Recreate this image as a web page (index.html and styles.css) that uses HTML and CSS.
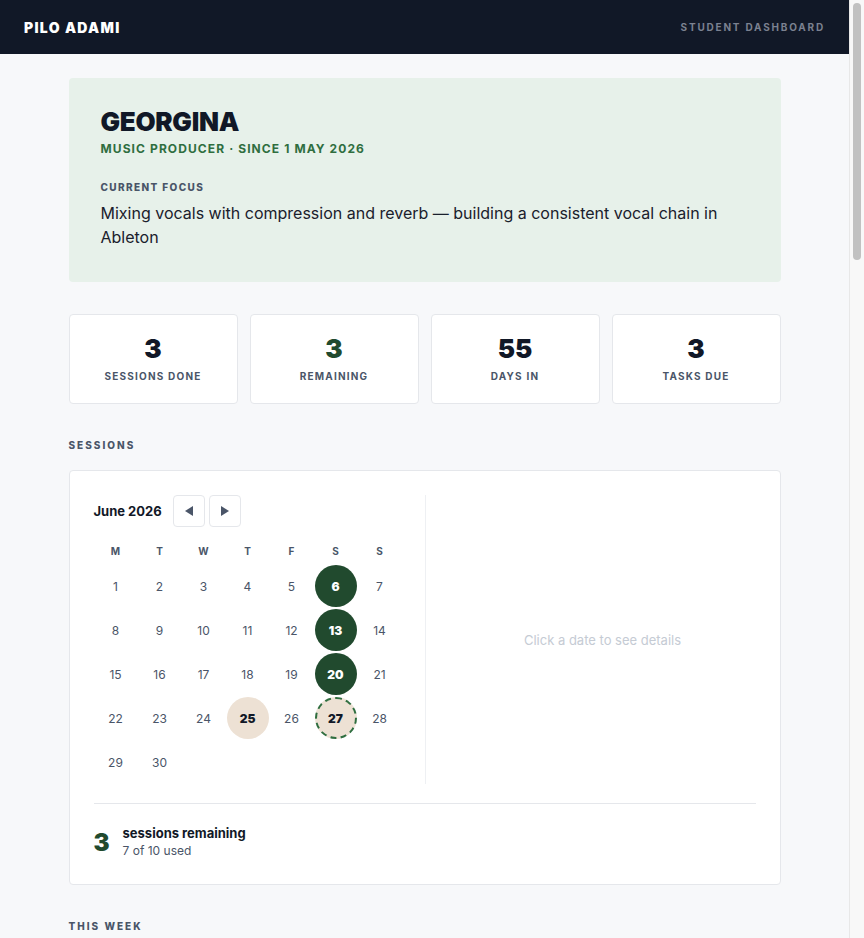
FILE: index.html
```html
<!DOCTYPE html>
<html lang="en">
<head>
  <meta charset="UTF-8">
  <title>Pilo Adami · Student Dashboard</title>
  <link rel="stylesheet" href="styles.css">
</head>
<body>
  <header class="topbar">
    <div class="brand">PILO ADAMI</div>
    <div class="topbar-note">STUDENT DASHBOARD</div>
  </header>

  <main class="page">
    <section class="profile">
      <h1 class="profile-name">GEORGINA</h1>
      <div class="profile-role">MUSIC PRODUCER · SINCE 1 MAY 2026</div>
      <div class="focus-label">CURRENT FOCUS</div>
      <p class="focus-text">Mixing vocals with compression and reverb — building a consistent vocal chain in Ableton</p>
    </section>

    <section class="stats">
      <div class="stat"><div class="stat-num">3</div><div class="stat-label">SESSIONS DONE</div></div>
      <div class="stat"><div class="stat-num green">3</div><div class="stat-label">REMAINING</div></div>
      <div class="stat"><div class="stat-num">55</div><div class="stat-label">DAYS IN</div></div>
      <div class="stat"><div class="stat-num">3</div><div class="stat-label">TASKS DUE</div></div>
    </section>

    <h2 class="section-label">SESSIONS</h2>
    <section class="card sessions">
      <div class="cal-body">
        <div class="cal">
          <div class="cal-head">
            <span class="cal-month">June 2026</span>
            <button class="nav-btn" aria-label="Previous month">
              <svg width="10" height="12" viewBox="0 0 10 12"><path d="M9 1 L1 6 L9 11 Z" fill="#4a5568"/></svg>
            </button>
            <button class="nav-btn" aria-label="Next month">
              <svg width="10" height="12" viewBox="0 0 10 12"><path d="M1 1 L9 6 L1 11 Z" fill="#4a5568"/></svg>
            </button>
          </div>
          <div class="cal-grid" id="calGrid">
            <div class="wd">M</div><div class="wd">T</div><div class="wd">W</div><div class="wd">T</div><div class="wd">F</div><div class="wd">S</div><div class="wd">S</div>
          </div>
        </div>
        <div class="cal-detail">Click a date to see details</div>
      </div>

      <div class="summary">
        <div class="summary-num">3</div>
        <div>
          <div class="summary-title">sessions remaining</div>
          <div class="summary-sub">7 of 10 used</div>
        </div>
      </div>
    </section>

    <h2 class="section-label">THIS WEEK</h2>
    <section class="card week">
      <div class="week-empty">No tasks scheduled this week</div>
    </section>
  </main>

  <!-- window scrollbar, drawn since the capture hides the real one -->
  <div class="scrollbar" aria-hidden="true"><div class="scroll-thumb"></div></div>

  <script>
    // June 2026 starts on a Monday
    const done = [6, 13, 20];
    const grid = document.getElementById("calGrid");
    for (let d = 1; d <= 30; d++) {
      const cell = document.createElement("div");
      cell.className = "day";
      if (done.includes(d)) cell.classList.add("done");
      if (d === 25) cell.classList.add("today");
      if (d === 27) cell.classList.add("booked");
      cell.innerHTML = `<span>${d}</span>`;
      grid.appendChild(cell);
    }
  </script>
</body>
</html>
```

FILE: styles.css
```css
body {
  margin: 0 15px 0 0;
  background: #f7f8fa;
  font-family: Inter, "Noto Sans", sans-serif;
  color: #111827;
}

.scrollbar {
  position: fixed;
  top: 0;
  right: 0;
  width: 14px;
  height: 100vh;
  background: #f8f8f8;
  border-left: 1px solid #e8e8e8;
}

.scroll-thumb {
  margin: 3px 3px 0 3px;
  height: 257px;
  background: #c1c1c1;
  border-radius: 4px;
}

.topbar {
  height: 54px;
  background: #111827;
  display: flex;
  align-items: center;
  justify-content: space-between;
  padding: 0 24px;
}

.brand {
  color: #fff;
  font-size: 14px;
  font-weight: 900;
  letter-spacing: 1.3px;
}

.topbar-note {
  color: #7b8190;
  font-size: 10px;
  font-weight: 700;
  letter-spacing: 1.8px;
}

.page {
  max-width: 712px;
  margin: 24px auto 60px;
}

.profile {
  background: #e7f1ea;
  border-radius: 4px;
  padding: 31px 32px 33px;
}

.profile-name {
  margin: 0;
  font-size: 26px;
  line-height: 1;
  font-weight: 900;
  letter-spacing: -0.3px;
}

.profile-role {
  margin-top: 6px;
  color: #2f6e3f;
  font-size: 12px;
  font-weight: 700;
  letter-spacing: 1.1px;
}

.focus-label {
  margin-top: 25px;
  color: #4a5568;
  font-size: 10px;
  font-weight: 800;
  letter-spacing: 1.4px;
}

.focus-text {
  margin: 8px 0 0;
  font-size: 16px;
  line-height: 24px;
  color: #1a202c;
}

.stats {
  display: grid;
  grid-template-columns: repeat(4, 1fr);
  gap: 12px;
  margin-top: 32px;
}

.stat {
  background: #fff;
  border: 1px solid #e5e7eb;
  border-radius: 4px;
  height: 88px;
  display: flex;
  flex-direction: column;
  align-items: center;
  justify-content: center;
}

.stat-num {
  font-size: 26px;
  font-weight: 900;
  line-height: 30px;
  margin-top: -3px;
}

.stat-num.green { color: #214a2e; }

.stat-label {
  margin-top: 6px;
  color: #4a5568;
  font-size: 10px;
  font-weight: 700;
  letter-spacing: 1.2px;
}

.section-label {
  margin: 35px 0 19px;
  font-size: 10px;
  line-height: 12px;
  font-weight: 800;
  letter-spacing: 2px;
  color: #4a5568;
}

.card {
  background: #fff;
  border: 1px solid #e5e7eb;
  border-radius: 4px;
  padding: 24px;
}

.cal-body {
  display: grid;
  grid-template-columns: 1fr 1fr;
}

.cal-head {
  display: flex;
  align-items: center;
  height: 32px;
  gap: 4px;
}

.cal-month {
  font-size: 13px;
  font-weight: 700;
  margin-right: 7px;
}

.nav-btn {
  width: 32px;
  height: 32px;
  padding: 0;
  background: #fff;
  border: 1px solid #e5e7eb;
  border-radius: 4px;
  display: flex;
  align-items: center;
  justify-content: center;
}

.cal-grid {
  display: grid;
  grid-template-columns: repeat(7, 44px);
  grid-template-rows: 21px;
  grid-auto-rows: 44px;
  margin-top: 16px;
}

.wd {
  text-align: center;
  font-size: 10px;
  font-weight: 700;
  color: #4a5568;
  line-height: 16px;
}

.day {
  display: flex;
  align-items: center;
  justify-content: center;
}

.day span {
  width: 42px;
  height: 42px;
  border-radius: 50%;
  display: flex;
  align-items: center;
  justify-content: center;
  font-size: 12px;
  color: #4a5568;
  box-sizing: border-box;
}

.day.done span {
  background: #214a2e;
  color: #fff;
  font-weight: 900;
}

.day.today span {
  background: #ede1d4;
  color: #111827;
  font-weight: 900;
}

.day.booked span {
  background: #ede1d4;
  color: #111827;
  font-weight: 900;
  border: 2px dashed #2f6e3f;
}

.cal-detail {
  border-left: 1px solid #eef0f3;
  padding-left: 24px;
  display: flex;
  align-items: center;
  justify-content: center;
  font-size: 13px;
  color: #c5cbd4;
}

.summary {
  margin-top: 19px;
  border-top: 1px solid #e5e7eb;
  padding-top: 20px;
  display: flex;
  align-items: center;
  gap: 13px;
}

.summary-num {
  font-size: 24px;
  font-weight: 900;
  color: #214a2e;
}

.summary-title {
  font-size: 13px;
  font-weight: 700;
  line-height: 18px;
}

.summary-sub {
  font-size: 12px;
  color: #4a5568;
  line-height: 18px;
}

.week {
  height: 120px;
}

.week-empty {
  font-size: 13px;
  color: #c5cbd4;
}
```
